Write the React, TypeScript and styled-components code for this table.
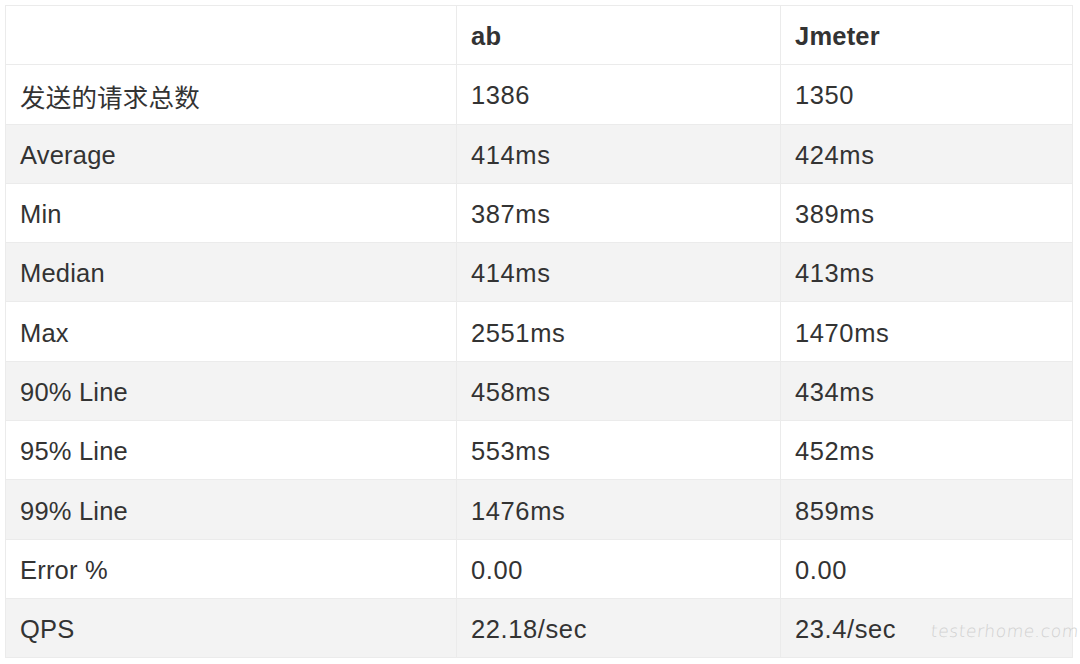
import React from "react";
import styled, { createGlobalStyle } from "styled-components";

const GlobalStyle = createGlobalStyle`
  html, body {
    margin: 0;
    padding: 0;
    background: #ffffff;
  }
  body {
    font-family: "Liberation Sans", "Noto Sans CJK SC", sans-serif;
  }
`;

const Page = styled.div`
  position: relative;
  width: 1080px;
  height: 664px;
  padding: 5px 0 0 5px;
  box-sizing: border-box;
  background: #ffffff;
  overflow: hidden;
`;

const Table = styled.div`
  display: grid;
  grid-template-columns: 451px 324px 292px;
  grid-auto-rows: 59.3px;
  width: max-content;
  border-top: 1px solid #ebebeb;
  border-left: 1px solid #ebebeb;
`;

const Cell = styled.div<{ $striped: boolean; $head: boolean; $numeric: boolean }>`
  box-sizing: border-box;
  display: flex;
  align-items: center;
  padding: 3px 14px 0 14px;
  border-right: 1px solid #ebebeb;
  border-bottom: 1px solid #ebebeb;
  background: ${(p) => (p.$striped ? "#f3f3f3" : "#ffffff")};
  color: #333333;
  font-family: "Liberation Sans", "Noto Sans CJK SC", sans-serif;
  font-size: 25.5px;
  letter-spacing: ${(p) => (p.$numeric ? "0.6px" : "0.2px")};
  font-weight: ${(p) => (p.$head ? 700 : 400)};
  white-space: nowrap;
`;

const Watermark = styled.div`
  position: absolute;
  left: 931px;
  top: 621px;
  color: #d0d0d0;
  font-family: "DejaVu Sans", sans-serif;
  font-weight: 200;
  font-size: 17px;
  letter-spacing: 0.6px;
  transform: skewX(-6deg);
  pointer-events: none;
`;

const header = ["", "ab", "Jmeter"];
const rows: string[][] = [
  ["发送的请求总数", "1386", "1350"],
  ["Average", "414ms", "424ms"],
  ["Min", "387ms", "389ms"],
  ["Median", "414ms", "413ms"],
  ["Max", "2551ms", "1470ms"],
  ["90% Line", "458ms", "434ms"],
  ["95% Line", "553ms", "452ms"],
  ["99% Line", "1476ms", "859ms"],
  ["Error %", "0.00", "0.00"],
  ["QPS", "22.18/sec", "23.4/sec"],
];

export default function App() {
  return (
    <>
      <GlobalStyle />
      <Page>
        <Table>
          {header.map((h, i) => (
            <Cell key={`h${i}`} $striped={false} $head={true} $numeric={false}>
              {h}
            </Cell>
          ))}
          {rows.map((r, ri) =>
            r.map((c, ci) => (
              <Cell
                key={`${ri}-${ci}`}
                $striped={ri % 2 === 1}
                $head={false}
                $numeric={ci > 0}
              >
                {c}
              </Cell>
            ))
          )}
        </Table>
        <Watermark>testerhome.com</Watermark>
      </Page>
    </>
  );
}
